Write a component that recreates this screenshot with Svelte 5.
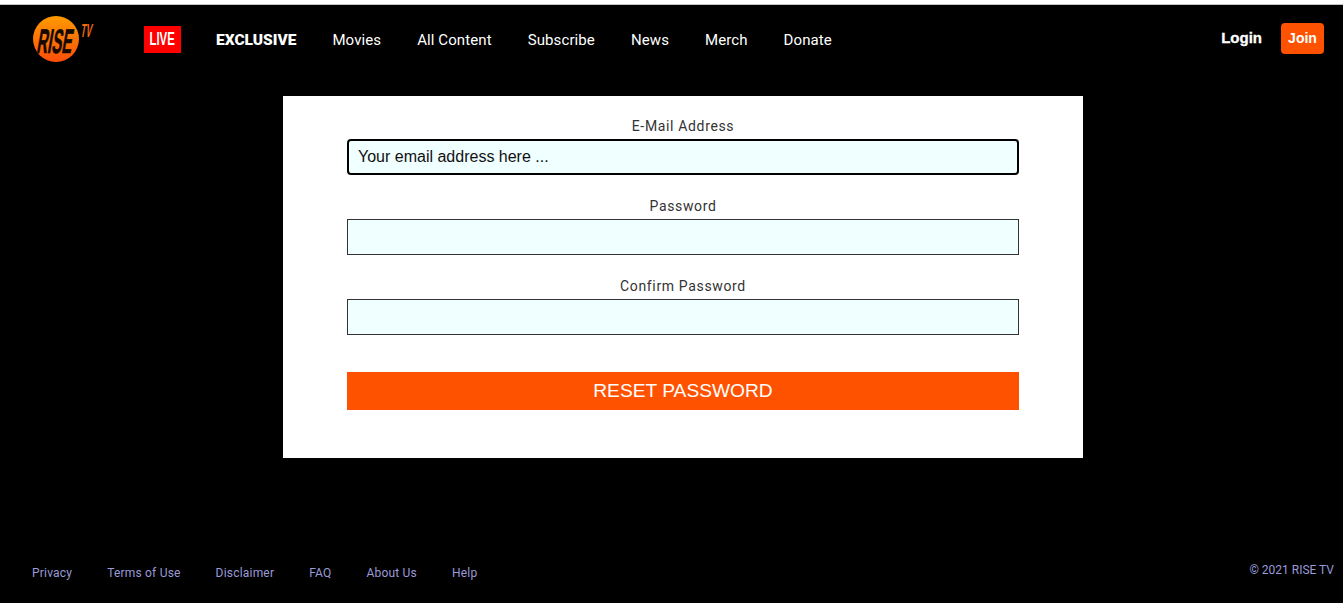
<script lang="ts">
	const navLinks = ["Movies", "All Content", "Subscribe", "News", "Merch", "Donate"];
	const footerLinks = ["Privacy", "Terms of Use", "Disclaimer", "FAQ", "About Us", "Help"];
	const fields = [
		{ id: "email", label: "E-Mail Address", type: "email", placeholder: "Your email address here ...", focused: true },
		{ id: "password", label: "Password", type: "password", placeholder: "", focused: false },
		{ id: "confirm", label: "Confirm Password", type: "password", placeholder: "", focused: false }
	];
</script>

<div class="page">
	<header>
		<a class="logo" href="#home" aria-label="Rise TV">
			<svg width="62" height="48" viewBox="0 0 62 48">
				<defs>
					<linearGradient id="disc" x1="0" y1="0" x2="0" y2="1">
						<stop offset="0" stop-color="#ff9a00" />
						<stop offset="1" stop-color="#fb4e08" />
					</linearGradient>
				</defs>
				<circle cx="24" cy="24" r="23" fill="url(#disc)" />
				<text class="rise" transform="translate(4 38) skewX(-10) scale(.44 1)">RISE</text>
				<text class="tv" transform="translate(48 22) skewX(-10) scale(.46 1)">TV</text>
			</svg>
		</a>
		<nav>
			<a class="live" href="#live"><span>LIVE</span></a>
			<a class="exclusive" href="#exclusive">EXCLUSIVE</a>
			{#each navLinks as link}
				<a class="plain" href="#{link}">{link}</a>
			{/each}
		</nav>
		<div class="account">
			<a class="login" href="#login">Login</a>
			<a class="join" href="#join">Join</a>
		</div>
	</header>

	<main>
		<form class="card">
			{#each fields as field}
				<div class="field">
					<label for={field.id}>{field.label}</label>
					<input id={field.id} type={field.type} placeholder={field.placeholder} class:focused={field.focused} />
				</div>
			{/each}
			<button type="button">RESET PASSWORD</button>
		</form>
	</main>

	<footer>
		<div class="links">
			{#each footerLinks as link}
				<a href="#{link}">{link}</a>
			{/each}
		</div>
		<span class="copy">© 2021 RISE TV</span>
	</footer>
</div>

<style>
	:global(body) {
		background: #000;
		overflow: hidden;
	}

	.page {
		height: 603px;
		display: flex;
		flex-direction: column;
		background: #000;
		border-top: 4px solid #fff;
		box-sizing: border-box;
		font-family: Roboto, "Liberation Sans", sans-serif;
	}

	a {
		color: #fff;
		text-decoration: none;
	}

	header {
		height: 70px;
		box-sizing: border-box;
		border-top: 1px solid #c4c4c4;
		display: flex;
		align-items: center;
		padding: 0 19px 1px 32px;
	}

	.logo {
		display: flex;
		width: 112px;
	}

	.logo svg {
		overflow: visible;
	}

	.rise {
		font: 700 34px "Liberation Sans", sans-serif;
		fill: #140800;
		stroke: #140800;
		stroke-width: 0.6px;
	}

	.tv {
		font: 700 19px "Liberation Sans", sans-serif;
		fill: #f26a10;
	}

	nav {
		display: flex;
		align-items: center;
		gap: 36px;
		font-size: 15px;
		letter-spacing: 0.1px;
	}

	.plain,
	.exclusive {
		padding-top: 2px;
	}

	.live {
		width: 37px;
		height: 27px;
		display: flex;
		align-items: center;
		justify-content: center;
		background: #f00;
		font: 700 19px "Liberation Sans", sans-serif;
		letter-spacing: 0;
	}

	.live span {
		display: inline-block;
		transform: scaleX(0.6);
	}

	.exclusive {
		margin-left: -1px;
		font-weight: 900;
		font-size: 15.5px;
		letter-spacing: 0;
	}

	.account {
		margin-left: auto;
		margin-top: -2px;
		display: flex;
		align-items: center;
		gap: 19px;
		font-family: "Liberation Sans", sans-serif;
	}

	.login {
		font-weight: 700;
		font-size: 15px;
		margin-bottom: 2px;
		-webkit-text-stroke: 0.3px #fff;
	}

	.join {
		width: 43px;
		height: 31px;
		display: flex;
		align-items: center;
		justify-content: center;
		background: #ff5200;
		border-radius: 4px;
		font-weight: 700;
		font-size: 14px;
	}

	main {
		display: flex;
		justify-content: center;
		padding: 22px 0 0 23px;
	}

	.card {
		width: 800px;
		height: 362px;
		box-sizing: border-box;
		background: #fff;
		padding: 21px 64px 0;
		display: flex;
		flex-direction: column;
	}

	.field {
		display: flex;
		flex-direction: column;
		height: 80px;
	}

	label {
		height: 22px;
		line-height: 18px;
		text-align: center;
		font-size: 14px;
		letter-spacing: 0.65px;
		color: #333;
	}

	input {
		height: 36px;
		box-sizing: border-box;
		background: #f0ffff;
		border: 1px solid #333;
		border-radius: 0;
		padding: 0 10px;
		font: 16px "Liberation Sans", Arial, sans-serif;
		outline: none;
	}

	input::placeholder {
		color: #111;
		opacity: 1;
	}

	input.focused {
		border: 2px solid #000;
		border-radius: 4px;
		padding: 0 9px;
	}

	button {
		margin-top: 15px;
		height: 38px;
		border: 0;
		background: #ff5200;
		color: #fff;
		font: 19.2px "Liberation Sans", Arial, sans-serif;
	}

	footer {
		margin-top: auto;
		display: flex;
		justify-content: space-between;
		padding: 0 9px 23px 32px;
		align-items: flex-start;
		font-size: 12px;
		letter-spacing: 0.2px;
		color: #9a9ad8;
	}

	.links {
		display: flex;
		gap: 35px;
	}

	.links a {
		color: #9a9ad8;
	}

	.copy {
		margin-top: -3px;
		letter-spacing: 0;
	}
</style>
